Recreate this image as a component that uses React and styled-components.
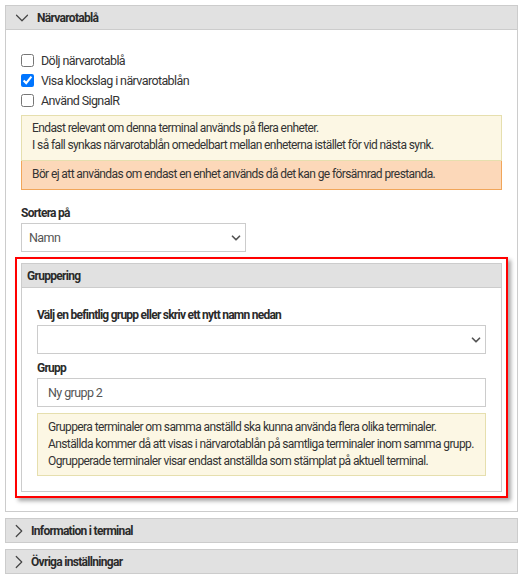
import React from 'react';
import styled, { createGlobalStyle } from 'styled-components';
import { ChevronDown, ChevronRight } from 'lucide-react';

const GlobalStyle = createGlobalStyle`
  body {
    margin: 0;
    background: #fff;
    font-family: "Roboto", "Liberation Sans", sans-serif;
    font-size: 12px;
    letter-spacing: -0.6px;
    color: #333;
  }
`;

const Page = styled.div`
  width: 513px;
  padding: 5px 7px 5px 5px;
  display: flex;
  flex-direction: column;
  gap: 6px;
`;

const Panel = styled.div`
  border: 1px solid #cccccc;
  background: #fff;
`;

const PanelHeader = styled.div`
  height: 23px;
  display: flex;
  align-items: center;
  gap: ${(p) => p.$gap || '0'};
  padding-left: ${(p) => p.$pl || '5px'};
  background: #e1e1e1;
  border-bottom: ${(p) => (p.$collapsed ? 'none' : '1px solid #cccccc')};
  font-size: 12px;
  font-weight: bold;
  letter-spacing: -0.7px;
  color: #2b2b2b;
  svg {
    flex-shrink: 0;
  }
`;

const PanelBody = styled.div`
  padding: ${(p) => p.$pad || '20px 15px 13px'};
  display: flex;
  flex-direction: column;
`;

const CheckRow = styled.label`
  height: 20px;
  display: flex;
  align-items: center;
  gap: 7px;
  font-size: 12.5px;
  color: #333;

  input {
    width: 13px;
    height: 13px;
    margin: 0;
  }
`;

const Notice = styled.div`
  padding: ${(p) => p.$pad || '4px 10px 6px'};
  font-size: 12px;
  line-height: 17px;
  color: #333;
  background: ${(p) => (p.$tone === 'warn' ? '#fcd8b9' : '#fcf7e4')};
  border: 1px solid ${(p) => (p.$tone === 'warn' ? '#f1a65a' : '#e6dfae')};
  border-top-width: ${(p) => (p.$joined ? '0' : '1px')};
`;

const FieldLabel = styled.div`
  font-size: 12px;
  font-weight: bold;
  letter-spacing: -0.75px;
  line-height: 16px;
  color: #2b2b2b;
  margin: ${(p) => p.$mt || '0'} 0 2px;
`;

const Control = styled.div`
  height: 29px;
  width: ${(p) => p.$width || 'auto'};
  box-sizing: border-box;
  display: flex;
  align-items: center;
  justify-content: space-between;
  padding: 0 ${(p) => (p.$select ? '2px' : '10px')} 0 ${(p) => (p.$select ? '7px' : '10px')};
  border: 1px solid #cccccc;
  background: #fff;
  font-size: 12.5px;
  color: #555;
`;

const Highlight = styled.div`
  margin: 5px -6px 0;
  padding: 4px;
  border: 2px solid #ff0000;
  box-shadow: 3px 3px 4px rgba(0, 0, 0, 0.35);
`;

const Stack = styled.div`
  display: flex;
  flex-direction: column;
  margin-top: ${(p) => p.$mt || '0'};
`;

function Select({ value, width }) {
  return (
    <Control $select $width={width}>
      <span>{value}</span>
      <ChevronDown size={14} strokeWidth={3} color="#555" />
    </Control>
  );
}

export default function App() {
  return (
    <>
      <GlobalStyle />
      <Page>
        <Panel>
          <PanelHeader $pl="5px" $gap="4px">
            <ChevronDown size={22} strokeWidth={1.3} color="#444" />
            Närvarotablå
          </PanelHeader>
          <PanelBody>
            <CheckRow>
              <input type="checkbox" />
              Dölj närvarotablå
            </CheckRow>
            <CheckRow>
              <input type="checkbox" defaultChecked />
              Visa klockslag i närvarotablån
            </CheckRow>
            <CheckRow>
              <input type="checkbox" />
              Använd SignalR
            </CheckRow>

            <Stack $mt="5px">
              <Notice>
                Endast relevant om denna terminal används på flera enheter.
                <br />
                I så fall synkas närvarotablån omedelbart mellan enheterna istället för vid nästa synk.
              </Notice>
              <Notice $tone="warn" $joined $pad="5px 10px 6px">
                Bör ej att användas om endast en enhet används då det kan ge försämrad prestanda.
              </Notice>
            </Stack>

            <FieldLabel $mt="15px">Sortera på</FieldLabel>
            <Select value="Namn" width="225px" />

            <Highlight>
              <Panel>
                <PanelHeader>Gruppering</PanelHeader>
                <PanelBody $pad="19px 15px 15px">
                  <FieldLabel>Välj en befintlig grupp eller skriv ett nytt namn nedan</FieldLabel>
                  <Select value="" />
                  <FieldLabel $mt="6px">Grupp</FieldLabel>
                  <Control>Ny grupp 2</Control>
                  <Stack $mt="6px">
                    <Notice $pad="5px 10px 5px">
                      Gruppera terminaler om samma anställd ska kunna använda flera olika terminaler.
                      <br />
                      Anställda kommer då att visas i närvarotablån på samtliga terminaler inom samma grupp.
                      <br />
                      Ogrupperade terminaler visar endast anställda som stämplat på aktuell terminal.
                    </Notice>
                  </Stack>
                </PanelBody>
              </Panel>
            </Highlight>
          </PanelBody>
        </Panel>

        <Panel>
          <PanelHeader $collapsed $pl="2px" $gap="1px">
            <ChevronRight size={22} strokeWidth={1.3} color="#444" />
            Information i terminal
          </PanelHeader>
        </Panel>
        <Panel>
          <PanelHeader $collapsed $pl="2px" $gap="1px">
            <ChevronRight size={22} strokeWidth={1.3} color="#444" />
            Övriga inställningar
          </PanelHeader>
        </Panel>
      </Page>
    </>
  );
}
